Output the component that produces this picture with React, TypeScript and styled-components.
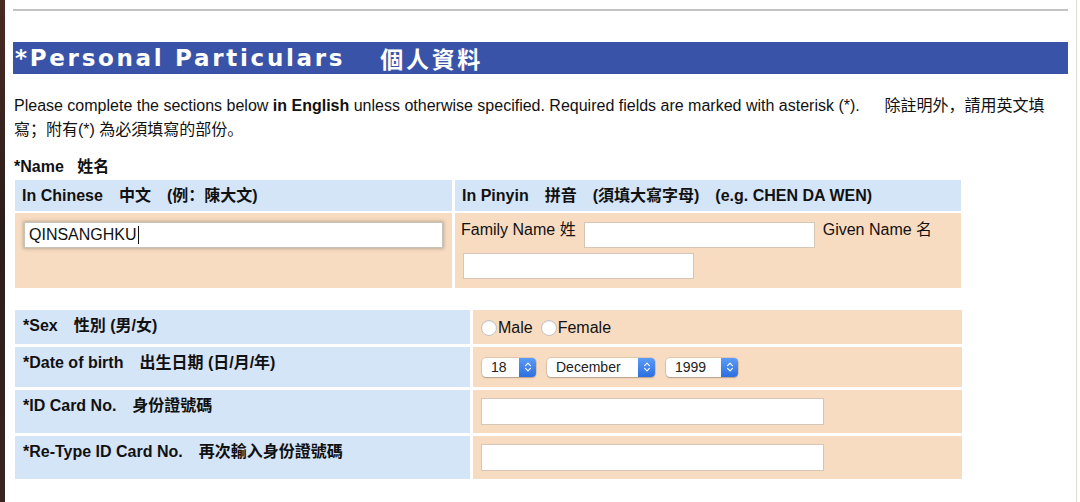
import styled, { createGlobalStyle } from "styled-components";

const GlobalStyle = createGlobalStyle`
  html, body {
    margin: 0;
    background: #fff;
  }
  body {
    font-family: "Liberation Sans", "Noto Sans CJK SC", sans-serif;
    font-size: 16px;
    color: #111;
  }
`;

export default function App() {
  return (
    <>
      <GlobalStyle />
      <Frame>
        <LeftEdge />
        <Page>
          <Rule />
          <TitleBar>
            *Personal Particulars<TitleCjk>個人資料</TitleCjk>
          </TitleBar>
          <Intro>
            Please complete the sections below <b>in English</b> unless
            otherwise specified. Required fields are marked with asterisk
            (*).&nbsp;&nbsp;　除註明外，請用英文填
            <br />
            寫；附有(*) 為必須填寫的部份。
          </Intro>
          <SectionLabel>*Name&nbsp;&nbsp;&nbsp;姓名</SectionLabel>

          <NameGrid>
            <HeadCell>In Chinese　中文　(例：陳大文)</HeadCell>
            <HeadCell>In Pinyin　拼音　(須填大寫字母)　(e.g. CHEN DA WEN)</HeadCell>
            <BodyCell $inset={9}>
              <TextField $width={419} $focused>
                QINSANGHKU
                <Caret />
              </TextField>
            </BodyCell>
            <BodyCell $inset={6}>
              <FieldFlow>
                <FieldText>Family Name 姓</FieldText>
                <Input $width={231} />
                <FieldText>Given Name 名</FieldText>
                <Input $width={231} $nudge={2} />
              </FieldFlow>
            </BodyCell>
          </NameGrid>

          <DetailGrid>
            <LabelCell>*Sex　性別 (男/女)</LabelCell>
            <ValueCell>
              <RadioOption>
                <Radio type="radio" name="sex" />
                Male
              </RadioOption>
              <RadioOption>
                <Radio type="radio" name="sex" />
                Female
              </RadioOption>
            </ValueCell>

            <LabelCell>*Date of birth　出生日期 (日/月/年)</LabelCell>
            <ValueCell $inset={9} $gap={11}>
              <Picker value="18" width={54} />
              <Picker value="December" width={108} />
              <Picker value="1999" width={72} />
            </ValueCell>

            <LabelCell>*ID Card No.　身份證號碼</LabelCell>
            <ValueCell $inset={8}>
              <Input $width={343} $height={27} />
            </ValueCell>

            <LabelCell>*Re-Type ID Card No.　再次輸入身份證號碼</LabelCell>
            <ValueCell $inset={8}>
              <Input $width={343} $height={27} />
            </ValueCell>
          </DetailGrid>
        </Page>
      </Frame>
    </>
  );
}

const Picker = ({ value, width }: { value: string; width: number }) => (
  <PickerBox style={{ width }}>
    <PickerValue>{value}</PickerValue>
    <Stepper>
      <svg width="8" height="12" viewBox="0 0 8 12" fill="none">
        <path
          d="M1.6 4.6L4 2.2L6.4 4.6M1.6 7.4L4 9.8L6.4 7.4"
          stroke="#fff"
          strokeWidth="1.2"
          strokeLinecap="round"
          strokeLinejoin="round"
        />
      </svg>
    </Stepper>
  </PickerBox>
);

const Frame = styled.div`
  display: flex;
  height: 502px;
  overflow: hidden;
`;

const LeftEdge = styled.div`
  width: 5px;
  flex: none;
  background: linear-gradient(180deg, #4b2a22 0%, #2b1d1b 45%, #3a2420 100%);
`;

const Page = styled.div`
  width: 1072px;
  flex: none;
  box-sizing: border-box;
  padding: 9px 8px 0 8px;
  border-right: 1px solid #d9e0d2;
`;

const Rule = styled.div`
  height: 2px;
  background: #c3c3c3;
`;

const TitleBar = styled.div`
  margin-top: 31px;
  height: 32px;
  display: flex;
  align-items: center;
  padding-left: 2px;
  background: #3953a8;
  color: #fff;
  font-family: "DejaVu Sans", "Noto Sans CJK SC", sans-serif;
  font-weight: bold;
  font-size: 23px;
  letter-spacing: 2.7px;
  white-space: pre;
`;

const TitleCjk = styled.span`
  margin-left: 35px;
`;

const Intro = styled.p`
  margin: 20px 0 0;
  line-height: 24px;
  padding-left: 1px;
`;

const SectionLabel = styled.div`
  margin-top: 16px;
  padding-left: 1px;
  font-weight: bold;
  line-height: 17px;
`;

const NameGrid = styled.div`
  display: grid;
  grid-template-columns: 437px 506px;
  grid-template-rows: 31px 75px;
  gap: 2px 3px;
  margin: 5px 0 0 2px;
`;

const HeadCell = styled.div`
  box-sizing: border-box;
  padding: 7px;
  background: #d5e5f8;
  font-weight: bold;
  line-height: 17px;
  white-space: nowrap;
`;

const BodyCell = styled.div<{ $inset: number }>`
  box-sizing: border-box;
  padding: 9px ${(p) => p.$inset}px;
  background: #f8dcc1;
`;

const FieldFlow = styled.div`
  display: flex;
  flex-wrap: wrap;
  align-items: flex-start;
  gap: 5px 8px;
`;

const FieldText = styled.span`
  line-height: 16px;
  white-space: nowrap;
`;

const Input = styled.input<{ $width: number; $height?: number; $nudge?: number }>`
  box-sizing: border-box;
  width: ${(p) => p.$width}px;
  height: ${(p) => p.$height ?? 26}px;
  margin: 0 0 0 ${(p) => p.$nudge ?? 0}px;
  padding: 0 4px;
  border: 1px solid #d6c6b6;
  background: #fff;
  font: inherit;
  outline: none;
`;

const TextField = styled.div<{ $width: number; $focused?: boolean }>`
  box-sizing: border-box;
  width: ${(p) => p.$width}px;
  height: 26px;
  display: flex;
  align-items: center;
  padding: 0 4px;
  background: #fff;
  border: 1px solid #c9c2bb;
  box-shadow: ${(p) =>
    p.$focused ? "0 0 3px 1px rgba(120, 110, 100, 0.45)" : "none"};
  white-space: nowrap;
`;

const Caret = styled.span`
  width: 1px;
  height: 18px;
  margin-left: 1px;
  background: #111;
`;

const DetailGrid = styled.div`
  display: grid;
  grid-template-columns: 455px 489px;
  grid-template-rows: 34px 40px 43px 43px;
  gap: 3px;
  margin: 22px 0 0 2px;
`;

const LabelCell = styled.div`
  box-sizing: border-box;
  padding: 7px 8px;
  background: #d5e5f8;
  font-weight: bold;
  line-height: 17px;
  white-space: nowrap;
`;

const ValueCell = styled.div<{ $inset?: number; $gap?: number }>`
  box-sizing: border-box;
  display: flex;
  align-items: center;
  gap: ${(p) => p.$gap ?? 12}px;
  padding: 0 ${(p) => p.$inset ?? 8}px;
  background: #f8dcc1;
`;

const RadioOption = styled.label`
  display: flex;
  align-items: center;
  line-height: 17px;
  margin-right: -4px;
`;

const Radio = styled.input`
  appearance: none;
  width: 16px;
  height: 16px;
  margin: 2px 1px 0 0;
  border-radius: 50%;
  border: 1px solid #c4c4c4;
  background: #fff;
  box-shadow: inset 0 1px 1px rgba(0, 0, 0, 0.08);
`;

const PickerBox = styled.div`
  display: flex;
  height: 19px;
  border-radius: 4px;
  background: #fff;
  box-shadow: 0 0 0 0.5px rgba(0, 0, 0, 0.18), 0 1px 1.5px rgba(0, 0, 0, 0.2);
  font-size: 14px;
`;

const PickerValue = styled.span`
  flex: 1;
  padding-left: 9px;
  line-height: 19px;
  color: #222;
`;

const Stepper = styled.span`
  width: 17px;
  display: flex;
  align-items: center;
  justify-content: center;
  border-radius: 0 4px 4px 0;
  background: linear-gradient(180deg, #5a9cf6 0%, #2d6fe0 100%);
`;
